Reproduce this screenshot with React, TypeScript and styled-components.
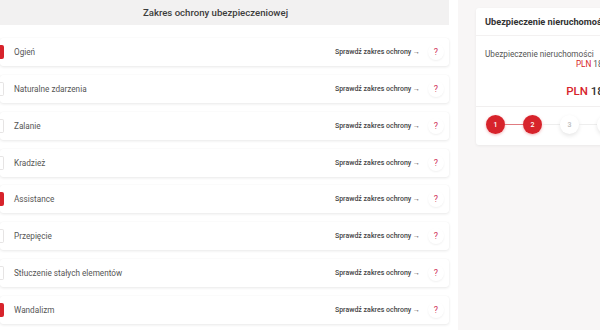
import React from 'react';
import styled, { createGlobalStyle } from 'styled-components';

const red = '#d7232b';

const coverage = [
  { name: 'Ogień', active: true },
  { name: 'Naturalne zdarzenia', active: false },
  { name: 'Zalanie', active: false },
  { name: 'Kradzież', active: false },
  { name: 'Assistance', active: true },
  { name: 'Przepięcie', active: false },
  { name: 'Stłuczenie stałych elementów', active: false },
  { name: 'Wandalizm', active: true },
];

const steps = [
  { n: 1, done: true },
  { n: 2, done: true },
  { n: 3, done: false },
  { n: 4, done: false },
];

export default function App() {
  return (
    <>
      <GlobalStyle />
      <Page>
        <LeftPanel>
          <Header>Zakres ochrony ubezpieczeniowej</Header>
          <List>
            {coverage.map((c) => (
              <Row key={c.name}>
                <Marker $active={c.active} />
                <Name>{c.name}</Name>
                <Check>Sprawdź zakres ochrony →</Check>
                <Help>?</Help>
              </Row>
            ))}
          </List>
        </LeftPanel>
        <Side>
          <SummaryCard>
            <CardTitle>Ubezpieczenie nieruchomości</CardTitle>
            <CardBody>
              <ItemLabel>Ubezpieczenie nieruchomości</ItemLabel>
              <ItemPrice>
                <Cur>PLN</Cur> 186,00
              </ItemPrice>
              <Total>
                <Cur>PLN</Cur> 186,00
              </Total>
            </CardBody>
            <Stepper>
              {steps.map((s, i) => (
                <React.Fragment key={s.n}>
                  {i > 0 && <Connector $done={s.done} />}
                  <Step $done={s.done}>{s.n}</Step>
                </React.Fragment>
              ))}
            </Stepper>
          </SummaryCard>
        </Side>
      </Page>
    </>
  );
}

const GlobalStyle = createGlobalStyle`
  html, body {
    margin: 0;
    padding: 0;
    background: #f8f6f6;
    overflow: hidden;
  }
  body {
    font-family: Roboto, "Liberation Sans", Arial, sans-serif;
    color: #444;
  }
`;

const Page = styled.div`
  display: flex;
  gap: 18px;
  width: 760px;
  height: 330px;
`;

const LeftPanel = styled.div`
  width: 449px;
  flex: none;
  padding-right: 9px;
  background: #fff;
`;

const Header = styled.div`
  height: 25px;
  background: #f2f1f1;
  display: flex;
  align-items: center;
  justify-content: center;
  font-size: 9.6px;
  font-weight: 500;
  color: #3c3c3c;
  padding-right: 18px;
`;

const List = styled.div`
  display: flex;
  flex-direction: column;
  gap: 8.85px;
  padding-top: 13px;
`;

const Row = styled.div`
  height: 28px;
  display: flex;
  align-items: center;
  background: #fff;
  border-radius: 3px;
  box-shadow: 0 1px 3px rgba(0, 0, 0, 0.09), 0 0 1px rgba(0, 0, 0, 0.06);
  padding-right: 5px;
`;

const Marker = styled.span<{ $active: boolean }>`
  width: 4px;
  height: 14px;
  flex: none;
  border-radius: 0 2px 2px 0;
  box-sizing: border-box;
  background: ${(p) => (p.$active ? red : '#fff')};
  border: ${(p) => (p.$active ? 'none' : '1px solid #e6e4e4')};
  border-left: none;
`;

const Name = styled.span`
  flex: 1;
  margin-left: 10px;
  font-size: 8.2px;
  color: #555;
`;

const Check = styled.span`
  font-size: 7px;
  font-weight: 500;
  color: #444;
  margin-right: 8px;
`;

const Help = styled.span`
  width: 16px;
  height: 16px;
  border-radius: 50%;
  background: #fff;
  box-shadow: 0 1px 2px rgba(0, 0, 0, 0.06);
  display: flex;
  align-items: center;
  justify-content: center;
  font-size: 9px;
  color: #d0305a;
`;

const Side = styled.div`
  padding-top: 8px;
`;

const SummaryCard = styled.div`
  width: 260px;
  background: #fff;
  border-radius: 3px;
  box-shadow: 0 1px 3px rgba(0, 0, 0, 0.06);
`;

const CardTitle = styled.div`
  padding: 0 9px;
  height: 28px;
  box-sizing: border-box;
  font-size: 9.2px;
  font-weight: 700;
  color: #333;
  border-bottom: 1px solid #f3f1f1;
  display: flex;
  align-items: center;
  white-space: nowrap;
`;

const CardBody = styled.div`
  padding: 13px 9px 7px;
  display: flex;
  flex-direction: column;
  width: 133px;
  line-height: 10px;
`;

const ItemLabel = styled.div`
  font-size: 8.2px;
  color: #555;
  white-space: nowrap;
`;

const ItemPrice = styled.div`
  font-size: 8.2px;
  color: #555;
  align-self: flex-end;
  white-space: nowrap;
`;

const Total = styled.div`
  font-size: 11.5px;
  line-height: 15px;
  font-weight: 500;
  color: #333;
  align-self: flex-end;
  white-space: nowrap;
  margin-top: 15px;
  margin-right: -8px;
`;

const Cur = styled.span`
  color: ${red};
`;

const Stepper = styled.div`
  display: flex;
  align-items: center;
  padding: 8px 10px 11px;
  border-top: 1px solid #f1efef;
`;

const Step = styled.span<{ $done: boolean }>`
  width: 19px;
  height: 19px;
  flex: none;
  border-radius: 50%;
  display: flex;
  align-items: center;
  justify-content: center;
  font-size: 7px;
  font-weight: 500;
  background: ${(p) => (p.$done ? red : '#fff')};
  color: ${(p) => (p.$done ? '#fff' : '#bbb')};
  box-shadow: ${(p) =>
    p.$done ? '0 1px 3px rgba(215, 35, 43, 0.35)' : '0 2px 4px rgba(0, 0, 0, 0.1)'};
`;

const Connector = styled.span<{ $done: boolean }>`
  width: 18px;
  height: 1px;
  background: ${(p) => (p.$done ? '#e07b80' : '#eee')};
`;
